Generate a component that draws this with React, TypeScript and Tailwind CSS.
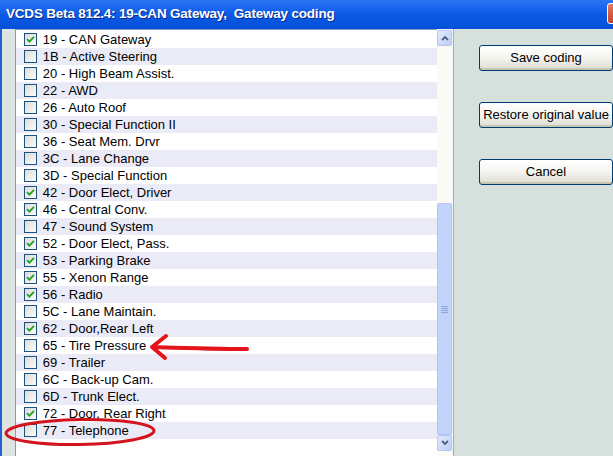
import React from "react";

const rows: [string, boolean][] = [
  ["19 - CAN Gateway", true],
  ["1B - Active Steering", false],
  ["20 - High Beam Assist.", false],
  ["22 - AWD", false],
  ["26 - Auto Roof", false],
  ["30 - Special Function II", false],
  ["36 - Seat Mem. Drvr", false],
  ["3C - Lane Change", false],
  ["3D - Special Function", false],
  ["42 - Door Elect, Driver", true],
  ["46 - Central Conv.", true],
  ["47 - Sound System", false],
  ["52 - Door Elect, Pass.", true],
  ["53 - Parking Brake", true],
  ["55 - Xenon Range", true],
  ["56 - Radio", true],
  ["5C - Lane Maintain.", false],
  ["62 - Door,Rear Left", true],
  ["65 - Tire Pressure", false],
  ["69 - Trailer", false],
  ["6C - Back-up Cam.", false],
  ["6D - Trunk Elect.", false],
  ["72 - Door, Rear Right", true],
  ["77 - Telephone", false],
];

function Check({ on }: { on: boolean }) {
  return (
    <span className="w-[13px] h-[13px] shrink-0 border border-[#1c5180] bg-gradient-to-br from-[#dcdcd7] to-[#fbfbf9] flex items-center justify-center">
      {on && (
        <svg width="9" height="9" viewBox="0 0 9 9">
          <path d="M1 4.2 L3.4 6.6 L8 1.8" fill="none" stroke="#21a121" strokeWidth="1.8" />
        </svg>
      )}
    </span>
  );
}

function XpButton({ label }: { label: string }) {
  return (
    <div className="w-[134px] h-[26px] shrink-0 rounded-[3px] border border-[#003c74] bg-gradient-to-b from-[#ffffff] via-[#f4f4f0] to-[#dcdcd2] flex items-center justify-center text-[13px] text-black whitespace-nowrap overflow-visible shadow-[inset_0_-2px_0_#c7c5b2]">
      {label}
    </div>
  );
}

function Arrow({ up }: { up: boolean }) {
  return (
    <div className="h-[16px] w-[15px] rounded-[2px] border border-[#b3c7f1] bg-gradient-to-br from-[#e3ebfd] to-[#bccdf6] flex items-center justify-center">
      <svg width="8" height="6" viewBox="0 0 8 6">
        <path d={up ? "M1 5 L4 2 L7 5" : "M1 1 L4 4 L7 1"} fill="none" stroke="#4d6185" strokeWidth="1.8" />
      </svg>
    </div>
  );
}

export default function App() {
  return (
    <div className="relative w-[613px] h-[456px] overflow-hidden bg-[#d6e0dd] font-['Liberation_Sans',Arial,sans-serif]">
      <div className="h-[29px] flex items-center pl-[6px] bg-gradient-to-b from-[#2a74f4] via-[#0a5ae6] to-[#0550d8] relative">
        <span className="text-white font-bold text-[13.5px] tracking-[-0.2px] [text-shadow:1px_1px_0_#0a2a8a]">
          VCDS Beta 812.4: 19-CAN Gateway,&nbsp; Gateway coding
        </span>
        <div className="absolute left-[607px] top-[3px] w-[21px] h-[21px] rounded-[3px] border border-white bg-gradient-to-b from-[#e7795d] to-[#c4402a]" />
      </div>
      <div className="flex h-[427px]">
        <div className="w-[15px] border-l-2 border-[#2a5fd0] bg-[#dde4e1]" />
        <div className="w-[427px] border-l border-t border-[#7f9db9] bg-white pt-[1px]">
          {rows.concat([["", false]]).map(([label, on], i) => (
            <div key={i} className={`h-[17px] flex items-center gap-[6px] pl-[8px] ${i % 2 ? "bg-[#ebebf7]" : "bg-white"}`}>
              {label && <Check on={on} />}
              <span className="text-[13px] text-black leading-none whitespace-nowrap">{label}</span>
            </div>
          ))}
        </div>
        <div className="w-[15px] flex flex-col bg-[#fbfaf5] pt-[1px]">
          <Arrow up />
          <div className="h-[157px]" />
          <div className="h-[232px] rounded-[2px] border border-[#b0c5f5] bg-[#c2d3fc] flex items-center justify-center">
            <div className="flex flex-col gap-[1px] mt-[-20px]">
              <div className="w-[7px] h-[1px] bg-[#8ba4e0]" />
              <div className="w-[7px] h-[1px] bg-[#8ba4e0]" />
              <div className="w-[7px] h-[1px] bg-[#8ba4e0]" />
              <div className="w-[7px] h-[1px] bg-[#8ba4e0]" />
            </div>
          </div>
          <Arrow up={false} />
        </div>
        <div className="w-[1px] bg-[#f0f4f2]" />
        <div className="w-[1px] bg-[#a3b2ad]" />
        <div className="flex-1 flex flex-col gap-[31px] pt-[16px] pl-[25px]">
          <XpButton label="Save coding" />
          <XpButton label="Restore original value" />
          <XpButton label="Cancel" />
        </div>
      </div>
      <svg className="absolute left-0 top-0 pointer-events-none" width="613" height="456" viewBox="0 0 613 456">
        <path d="M153 347 C185 348 215 349 247 349" fill="none" stroke="#e5141c" strokeWidth="4" strokeLinecap="round" />
        <path d="M166 336 L152 347 L165 358" fill="none" stroke="#e5141c" strokeWidth="4" strokeLinecap="round" strokeLinejoin="round" />
        <ellipse cx="80" cy="432" rx="74" ry="12.5" fill="none" stroke="#d3141f" strokeWidth="3" transform="rotate(-1 80 432)" />
      </svg>
    </div>
  );
}
